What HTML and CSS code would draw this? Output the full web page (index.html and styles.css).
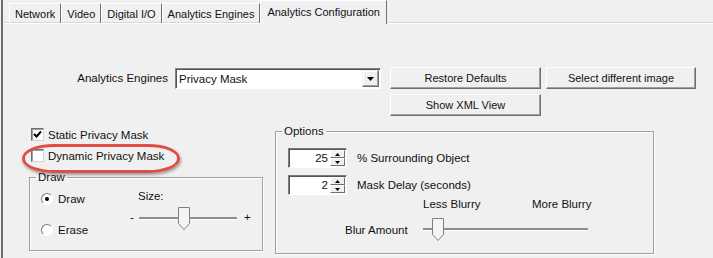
FILE: index.html
```html
<!DOCTYPE html>
<html lang="en">
<head>
<meta charset="UTF-8">
<title>Analytics Configuration</title>
<link rel="stylesheet" href="styles.css">
</head>
<body>

<div id="window">
  <div class="tabs">
    <div class="tab">Network</div>
    <div class="tab">Video</div>
    <div class="tab">Digital I/O</div>
    <div class="tab">Analytics Engines</div>
    <div class="tab active">Analytics Configuration</div>
  </div>

  <div class="panel">
    <div class="engine-row">
      <label class="engine-label">Analytics Engines</label>
      <div class="combo">
        <span class="combo-text">Privacy Mask</span>
        <span class="combo-btn">
          <svg width="7" height="4" viewBox="0 0 7 4"><path d="M0 0H7L3.5 4Z" fill="#000"/></svg>
        </span>
      </div>
      <div class="actions">
        <button type="button">Restore Defaults</button>
        <button type="button">Select different image</button>
        <button type="button">Show XML View</button>
      </div>
    </div>

    <div class="settings">
      <div class="mask-col">
        <div class="masks">
          <div class="check-row">
            <span class="checkbox">
              <svg width="9" height="9" viewBox="0 0 9 9"><path d="M1 4L3.5 6.5L8 1.5" fill="none" stroke="#000" stroke-width="2"/></svg>
            </span>
            Static Privacy Mask
          </div>
          <div class="check-row">
            <span class="checkbox"></span>
            Dynamic Privacy Mask
          </div>
          <span class="highlight"></span>
        </div>

        <fieldset class="group draw-group">
          <legend>Draw</legend>
          <div class="draw-body">
            <div class="radios">
              <div class="radio-row"><span class="radio on"></span>Draw</div>
              <div class="radio-row"><span class="radio"></span>Erase</div>
            </div>
            <div class="size">
              <div class="size-label">Size:</div>
              <div class="size-row">
                <span class="sign">-</span>
                <div class="slider size-slider">
                  <svg class="thumb" style="margin-left: 39px" width="12" height="23" viewBox="0 0 12 23"><path d="M0.5 0.5H11.5V16.5L6 22.5L0.5 16.5Z" fill="#f4f4f4" stroke="#808080"/></svg>
                </div>
                <span class="sign plus">+</span>
              </div>
            </div>
          </div>
        </fieldset>
      </div>

      <fieldset class="group options-group">
        <legend>Options</legend>
        <div class="spin-row">
          <div class="spin">
            <span class="spin-value">25</span>
            <span class="spin-btns">
              <span class="spin-btn"><svg width="5" height="3" viewBox="0 0 5 3"><path d="M0 3H5L2.5 0Z" fill="#000"/></svg></span>
              <span class="spin-btn"><svg width="5" height="3" viewBox="0 0 5 3"><path d="M0 0H5L2.5 3Z" fill="#000"/></svg></span>
            </span>
          </div>
          <span>% Surrounding Object</span>
        </div>
        <div class="spin-row">
          <div class="spin">
            <span class="spin-value">2</span>
            <span class="spin-btns">
              <span class="spin-btn"><svg width="5" height="3" viewBox="0 0 5 3"><path d="M0 3H5L2.5 0Z" fill="#000"/></svg></span>
              <span class="spin-btn"><svg width="5" height="3" viewBox="0 0 5 3"><path d="M0 0H5L2.5 3Z" fill="#000"/></svg></span>
            </span>
          </div>
          <span>Mask Delay (seconds)</span>
        </div>
        <div class="blur-scale">
          <span class="less">Less Blurry</span>
          <span>More Blurry</span>
        </div>
        <div class="blur-row">
          <span class="blur-label">Blur Amount</span>
          <div class="slider blur-slider">
            <svg class="thumb" style="margin-left: 9px" width="12" height="23" viewBox="0 0 12 23"><path d="M0.5 0.5H11.5V16.5L6 22.5L0.5 16.5Z" fill="#f4f4f4" stroke="#808080"/></svg>
          </div>
        </div>
      </fieldset>
    </div>
  </div>
</div>

</body>
</html>
```

FILE: styles.css
```css
body {
  margin: 0;
  width: 713px;
  height: 258px;
  overflow: hidden;
  background-color: #f0f0f0;
  font-family: "Liberation Sans", Arial, sans-serif;
  font-size: 11px;
  color: #111;
}
#window {
  margin-left: 1px;
  height: 258px;
  border-left: 2px solid #6e6e6e;
}

/* tab strip */
.tabs {
  display: flex;
  align-items: flex-end;
  height: 23px;
  padding-left: 6px;
}
.tab {
  height: 20px;
  line-height: 20px;
  padding: 0 5px;
  box-sizing: border-box;
  border-top: 1px solid #fff;
  border-left: 1px solid #fff;
  border-right: 1px solid #6e6e6e;
}
.tab.active {
  position: relative;
  z-index: 1;
  height: 24px;
  line-height: 22px;
  margin-bottom: -1px;
  padding: 0 6px;
  background-color: #f0f0f0;
}
.panel {
  font-size: 11.5px;
  border-top: 1px solid #fff;
  box-shadow: 0 -1px 0 #d8d8d8;
}

/* engine row */
.engine-row {
  display: flex;
  align-items: flex-start;
  margin-top: 43px;
}
.engine-label {
  width: 165px;
  line-height: 22px;
  text-align: right;
}
.combo {
  display: flex;
  align-items: center;
  justify-content: space-between;
  width: 206px;
  height: 21px;
  margin: 1px 0 0 7px;
  box-sizing: border-box;
  border: 1px solid;
  border-color: #828282 #fff #fff #828282;
  box-shadow: inset 1px 1px 0 #555;
  background-color: #fff;
}
.combo-text {
  padding-left: 3px;
}
.combo-btn {
  display: flex;
  align-items: center;
  justify-content: center;
  width: 17px;
  height: 17px;
  margin-right: 1px;
  box-sizing: border-box;
  border: 1px solid;
  border-color: #f0f0f0 #6e6e6e #6e6e6e #f0f0f0;
  box-shadow: inset -1px -1px 0 #a0a0a0, inset 1px 1px 0 #fff;
  background-color: #f0f0f0;
}
.actions {
  display: grid;
  grid-template-columns: 151px 150px;
  grid-auto-rows: 22px;
  gap: 5px;
  margin-left: 9px;
}
.actions button {
  padding: 0;
  font-family: inherit;
  font-size: 11px;
  color: #111;
  background-color: #f0f0f0;
  border: 1px solid;
  border-color: #fff #6e6e6e #6e6e6e #fff;
  box-shadow: inset -1px -1px 0 #a0a0a0;
}

/* lower settings */
.settings {
  display: flex;
  align-items: flex-start;
  margin-top: 8px;
}
.mask-col {
  width: 234px;
  margin-left: 26px;
}
.masks {
  position: relative;
}
.check-row {
  display: flex;
  align-items: center;
  height: 21px;
}
.checkbox {
  display: flex;
  align-items: center;
  justify-content: center;
  width: 13px;
  height: 13px;
  margin: 0 4px 0 2px;
  box-sizing: border-box;
  border: 1px solid;
  border-color: #6e6e6e #d4d4d4 #d4d4d4 #6e6e6e;
  box-shadow: inset 1px 1px 0 #a0a0a0;
  background-color: #fff;
}
.highlight {
  position: absolute;
  left: -7px;
  top: 20px;
  width: 158px;
  height: 29px;
  box-sizing: border-box;
  border: 3px solid #df4d47;
  border-radius: 32px / 14px;
  box-shadow: 1px 2px 3px rgba(0, 0, 0, 0.35);
}

.group {
  margin: 0;
  padding: 0;
  box-sizing: border-box;
  border: 1px solid #a0a0a0;
  box-shadow: 1px 1px 0 #fff, inset 1px 1px 0 #fff;
}
.group legend {
  margin-left: 6px;
  padding: 0 2px;
  line-height: 14px;
}
.draw-group {
  height: 81px;
  margin-top: 4px;
}
.draw-body {
  display: flex;
  padding-left: 11px;
}
.radios {
  display: flex;
  flex-direction: column;
  gap: 15px;
  width: 89px;
  padding-top: 7px;
}
.radio-row {
  display: flex;
  align-items: center;
  height: 16px;
}
.radio {
  display: flex;
  align-items: center;
  justify-content: center;
  width: 12px;
  height: 12px;
  margin-right: 5px;
  box-sizing: border-box;
  border: 1px solid;
  border-color: #7a7a7a #fff #fff #7a7a7a;
  border-radius: 50%;
  background-color: #fff;
}
.radio.on::after {
  content: "";
  width: 4px;
  height: 4px;
  border-radius: 50%;
  background-color: #000;
}
.size-label {
  margin-top: 5px;
  padding-left: 8px;
  line-height: 14px;
}
.size-row {
  display: flex;
  align-items: center;
  margin-top: 4px;
}
.sign {
  width: 9px;
  margin-top: -4px;
}
.sign.plus {
  width: auto;
  margin-left: 7px;
}
.slider {
  display: flex;
  height: 23px;
  background:
    linear-gradient(#8e8e8e, #8e8e8e) 0 10px / 100% 2px no-repeat,
    linear-gradient(#fff, #fff) 0 12px / 100% 1px no-repeat;
}
.size-slider {
  width: 98px;
}
.options-group {
  width: 379px;
  height: 130px;
  margin-left: 12px;
}
.spin-row {
  display: flex;
  align-items: center;
  margin: 10px 0 0 12px;
}
.spin-row + .spin-row {
  margin-top: 7px;
}
.spin {
  display: flex;
  align-items: center;
  justify-content: flex-end;
  width: 59px;
  height: 20px;
  margin-right: 10px;
  box-sizing: border-box;
  border: 1px solid;
  border-color: #7a7a7a #fff #fff #7a7a7a;
  box-shadow: inset 1px 1px 0 #555;
  background-color: #fff;
}
.spin-value {
  padding-right: 2px;
}
.spin-btns {
  display: flex;
  flex-direction: column;
  width: 15px;
  height: 16px;
  margin-right: 1px;
}
.spin-btn {
  display: flex;
  align-items: center;
  justify-content: center;
  flex: 1;
  box-sizing: border-box;
  border: 1px solid;
  border-color: #fff #6e6e6e #6e6e6e #fff;
  background-color: #f0f0f0;
}
.blur-scale {
  display: flex;
  margin-top: 2px;
  padding-left: 147px;
  line-height: 14px;
}
.less {
  width: 109px;
}
.blur-row {
  display: flex;
  align-items: center;
  margin-top: 7px;
  padding-left: 69px;
}
.blur-label {
  width: 78px;
}
.blur-slider {
  width: 165px;
}
```
